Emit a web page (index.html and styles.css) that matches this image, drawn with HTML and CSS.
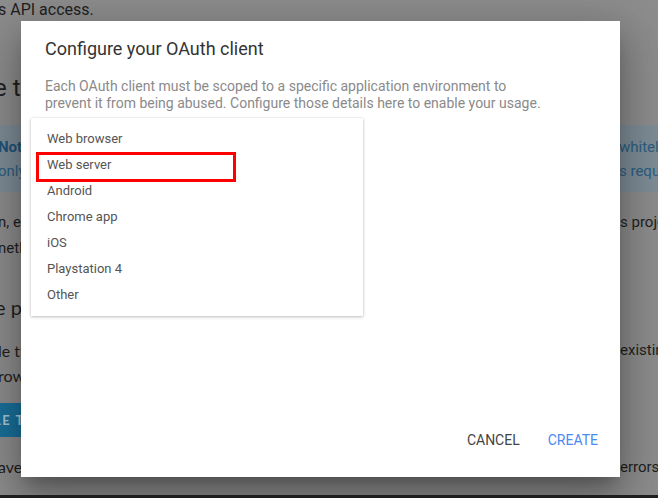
FILE: index.html
```html
<!DOCTYPE html>
<html lang="en">
<head>
    <meta charset="UTF-8">
    <title>Configure your OAuth client</title>
    <link rel="stylesheet" href="styles.css">
</head>
<body>
    <div class="screen">
        <div class="page">
            <div class="line line-top">
                <span>s API access.</span>
                <span></span>
            </div>
            <h2 class="page-title">e t</h2>

            <div class="note">
                <div class="line">
                    <span><b>Not</b></span>
                    <span>whitelist</span>
                </div>
                <div class="line">
                    <span>only</span>
                    <span>s request</span>
                </div>
            </div>

            <div class="para">
                <div class="line">
                    <span>n, en</span>
                    <span>s project</span>
                </div>
                <div class="line">
                    <span>neth</span>
                    <span></span>
                </div>
            </div>

            <h3 class="page-sub">e pr</h3>

            <div class="para para-alt">
                <div class="line">
                    <span>le th</span>
                    <span class="roboto">existing</span>
                </div>
                <div class="line">
                    <span>row</span>
                    <span></span>
                </div>
            </div>

            <div class="page-btn">LE T</div>

            <div class="para para-alt para-last">
                <div class="line">
                    <span>aven</span>
                    <span class="roboto">errors</span>
                </div>
            </div>

            <!-- dialog over the page -->
            <div class="dialog">
                <h1 class="dialog-title">Configure your OAuth client</h1>
                <p class="dialog-text">Each OAuth client must be scoped to a specific application environment to prevent it from being abused. Configure those details here to enable your usage.</p>

                <ul class="menu">
                    <li class="menu-item">Web browser</li>
                    <li class="menu-item marked">Web server</li>
                    <li class="menu-item">Android</li>
                    <li class="menu-item">Chrome app</li>
                    <li class="menu-item">iOS</li>
                    <li class="menu-item">Playstation 4</li>
                    <li class="menu-item">Other</li>
                </ul>

                <div class="dialog-actions">
                    <button class="btn">CANCEL</button>
                    <button class="btn btn-primary">CREATE</button>
                </div>
            </div>
        </div>
        <div class="status-bar"></div>
    </div>
</body>
</html>
```

FILE: styles.css
```css
body{
    margin: 0;
    overflow: hidden;
    font-family: Roboto, "Liberation Sans", sans-serif;
}
ul, li{
    list-style: none;
    padding: 0;
    margin: 0;
}
.screen{
    height: 498px;
    display: flex;
    flex-direction: column;
    background: #8d8d8d;
}
.page{
    flex: 1;
    position: relative;
    margin-left: -2px;
    color: #1f1f1f;
    font-size: 16px;
    white-space: nowrap;
    overflow: hidden;
}
.line{
    display: grid;
    grid-template-columns: 622px auto;
}
.line-top{
    line-height: 20px;
}
.page-title{
    margin: 53px 0 0 -4px;
    font-size: 24px;
    font-weight: 400;
    line-height: 30px;
}
.note{
    margin-top: 22px;
    padding: 10px 0 9px;
    background: #7e8d97;
    color: #2c5f82;
    font-size: 15px;
    line-height: 24px;
}
.note .line{
    grid-template-columns: 621px auto;
}
.note b{
    color: #1f5479;
}
.para{
    margin-top: 17px;
    font-size: 15px;
    line-height: 26px;
}
.page-sub{
    margin: 33px 0 0 -3px;
    font-family: Lato, "Liberation Sans", sans-serif;
    font-size: 20px;
    font-weight: 400;
    line-height: 26px;
}
.para-alt{
    margin-top: 18px;
    font-family: Lato, "Liberation Sans", sans-serif;
    font-size: 16px;
    line-height: 25px;
}
.para-alt .roboto{
    font-family: Roboto, "Liberation Sans", sans-serif;
    font-size: 15px;
}
.page-btn{
    margin-top: 15px;
    height: 34px;
    width: 120px;
    margin-left: -99px;
    padding-left: 95px;
    background: #19709a;
    color: #a9c6d4;
    font-family: Lato, "Liberation Sans", sans-serif;
    font-weight: 700;
    font-size: 13px;
    letter-spacing: 1.5px;
    line-height: 34px;
}
.para-last{
    margin-top: 18px;
    line-height: 24px;
}
.status-bar{
    height: 3px;
    background: #1e1e1e;
}

/* dialog */
.dialog{
    position: absolute;
    left: 23px;
    top: 21px;
    width: 599px;
    height: 456px;
    box-sizing: border-box;
    padding: 16px 24px 19px;
    display: flex;
    flex-direction: column;
    background: #fff;
    white-space: normal;
    box-shadow: 0 11px 15px -7px rgba(0,0,0,.25), 0 24px 38px 3px rgba(0,0,0,.18), 0 9px 46px 8px rgba(0,0,0,.16);
}
.dialog-title{
    margin: 0;
    font-size: 18px;
    font-weight: 400;
    line-height: 24px;
    color: #333;
}
.dialog-text{
    margin: 17px 0 0;
    max-width: 500px;
    font-size: 14px;
    line-height: 17px;
    color: #8a8a8a;
}
.menu{
    position: absolute;
    left: 10px;
    top: 97px;
    width: 332px;
    padding: 8px 0;
    background: #fff;
    box-shadow: 0 1px 3px rgba(0,0,0,.25), 0 0 1px rgba(0,0,0,.12);
}
.menu-item{
    position: relative;
    height: 26px;
    padding-left: 16px;
    line-height: 26px;
    font-size: 13px;
    color: #555;
}
.menu-item.marked:after{
    content: "";
    position: absolute;
    left: 5px;
    top: 0;
    width: 200px;
    height: 30px;
    box-sizing: border-box;
    border: 3px solid #f00;
}
.dialog-actions{
    margin-top: auto;
    margin-right: -10px;
    display: flex;
    justify-content: flex-end;
    gap: 12px;
}
.btn{
    border: 0;
    background: none;
    padding: 0 8px;
    height: 36px;
    font-family: Roboto, "Liberation Sans", sans-serif;
    font-size: 14px;
    color: #444;
}
.btn-primary{
    color: #4a89f3;
}
```
